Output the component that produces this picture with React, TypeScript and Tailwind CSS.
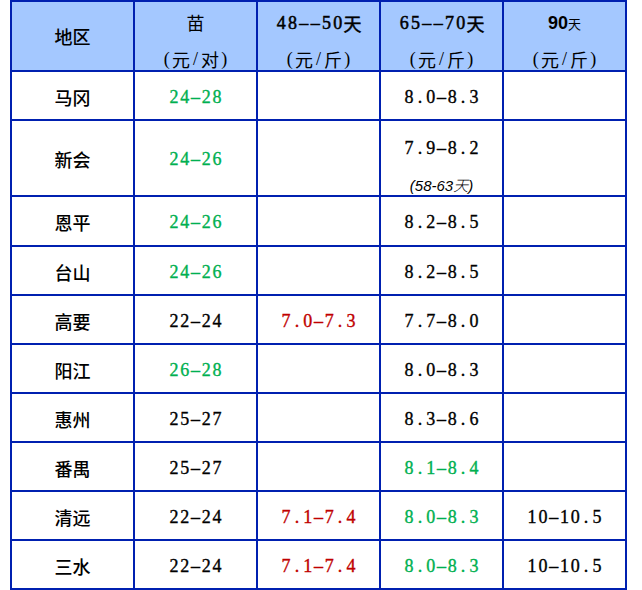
import React from 'react';

type Cell = { text?: string; color?: string; note?: string };

const GREEN = 'text-[#00b050]';
const RED = 'text-[#c00000]';

const rows: { region: string; cells: Cell[] }[] = [
  { region: '马冈', cells: [{ text: '24-28', color: GREEN }, {}, { text: '8.0-8.3' }, {}] },
  { region: '新会', cells: [{ text: '24-26', color: GREEN }, {}, { text: '7.9-8.2', note: '(58-63天)' }, {}] },
  { region: '恩平', cells: [{ text: '24-26', color: GREEN }, {}, { text: '8.2-8.5' }, {}] },
  { region: '台山', cells: [{ text: '24-26', color: GREEN }, {}, { text: '8.2-8.5' }, {}] },
  { region: '高要', cells: [{ text: '22-24' }, { text: '7.0-7.3', color: RED }, { text: '7.7-8.0' }, {}] },
  { region: '阳江', cells: [{ text: '26-28', color: GREEN }, {}, { text: '8.0-8.3' }, {}] },
  { region: '惠州', cells: [{ text: '25-27' }, {}, { text: '8.3-8.6' }, {}] },
  { region: '番禺', cells: [{ text: '25-27' }, {}, { text: '8.1-8.4', color: GREEN }, {}] },
  { region: '清远', cells: [{ text: '22-24' }, { text: '7.1-7.4', color: RED }, { text: '8.0-8.3', color: GREEN }, { text: '10-10.5' }] },
  { region: '三水', cells: [{ text: '22-24' }, { text: '7.1-7.4', color: RED }, { text: '8.0-8.3', color: GREEN }, { text: '10-10.5' }] },
];

const serif = "font-['Liberation_Serif','Noto_Sans_CJK_SC',serif]";
const cjk = "font-['Noto_Sans_CJK_SC',sans-serif]";

// 宋体式等宽：每个半角字符占同样宽度
function Mono({ text, wide = false }: { text: string; wide?: boolean }) {
  return (
    <span className={`inline-flex ${serif}`}>
      {text.split('').map((ch, i) =>
        /[\u4e00-\u9fff]/.test(ch) ? (
          <span key={i} className={cjk}>
            {ch}
          </span>
        ) : (
          <span key={i} className={`inline-block text-center ${wide ? 'w-[11.3px]' : 'w-[10.8px]'}`}>
            {ch === '-' ? '\u2013' : ch}
          </span>
        )
      )}
    </span>
  );
}

function HeaderCell({ top, bottom }: { top: React.ReactNode; bottom: string }) {
  return (
    <div className="bg-[#a4c8ff] flex flex-col items-center pt-[7px] text-[18px] text-black">
      <div className="leading-[26px] h-[26px]">{top}</div>
      <div className="leading-[26px] mt-[10px]">
        <Mono text={bottom} />
      </div>
    </div>
  );
}

export default function App() {
  return (
    <div className="w-[642px] h-[590px] bg-white">
      <div className="ml-[10px] inline-grid grid-cols-[121px_121px_121px_121px_121px] grid-rows-[68px_47px_74px_48px_47px_47px_47px_47px_47px_47px_47px] gap-[2px] p-[2px] bg-[#0020b0]">
        {/* 表头 */}
        <div className={`bg-[#a4c8ff] flex items-center justify-center text-[18px] font-medium text-black ${cjk}`}>
          地区
        </div>
        <HeaderCell top={<span className={cjk}>苗</span>} bottom="(元/对)" />
        <HeaderCell
          top={<span className="[-webkit-text-stroke:0.5px_currentColor]"><Mono text="48--50天" wide /></span>}
          bottom="(元/斤)"
        />
        <HeaderCell
          top={<span className="[-webkit-text-stroke:0.5px_currentColor]"><Mono text="65--70天" wide /></span>}
          bottom="(元/斤)"
        />
        <HeaderCell
          top={
            <span className="font-['Liberation_Sans',sans-serif] font-bold">
              90<span className={`text-[13px] font-normal ${cjk}`}>天</span>
            </span>
          }
          bottom="(元/斤)"
        />

        {rows.map((row) => (
          <React.Fragment key={row.region}>
            <div className={`bg-white flex items-center justify-center pt-[3px] text-[18px] font-medium text-black ${cjk}`}>
              {row.region}
            </div>
            {row.cells.map((c, i) =>
              c.note ? (
                <div key={i} className="bg-white flex flex-col items-center pt-[16px]">
                  <div className="text-[18px] leading-[20px] text-black [-webkit-text-stroke:0.35px_currentColor]">
                    <Mono text={c.text!} />
                  </div>
                  <div className="mt-[19px] text-[15px] leading-[18px] italic font-light text-black font-['Liberation_Sans','Noto_Sans_CJK_SC',sans-serif]">
                    {c.note}
                  </div>
                </div>
              ) : (
                <div
                  key={i}
                  className={`bg-white flex items-center justify-center pt-[3px] text-[18px] [-webkit-text-stroke:0.35px_currentColor] ${c.color ?? 'text-black'}`}
                >
                  {c.text && <Mono text={c.text} />}
                </div>
              )
            )}
          </React.Fragment>
        ))}
      </div>
    </div>
  );
}
